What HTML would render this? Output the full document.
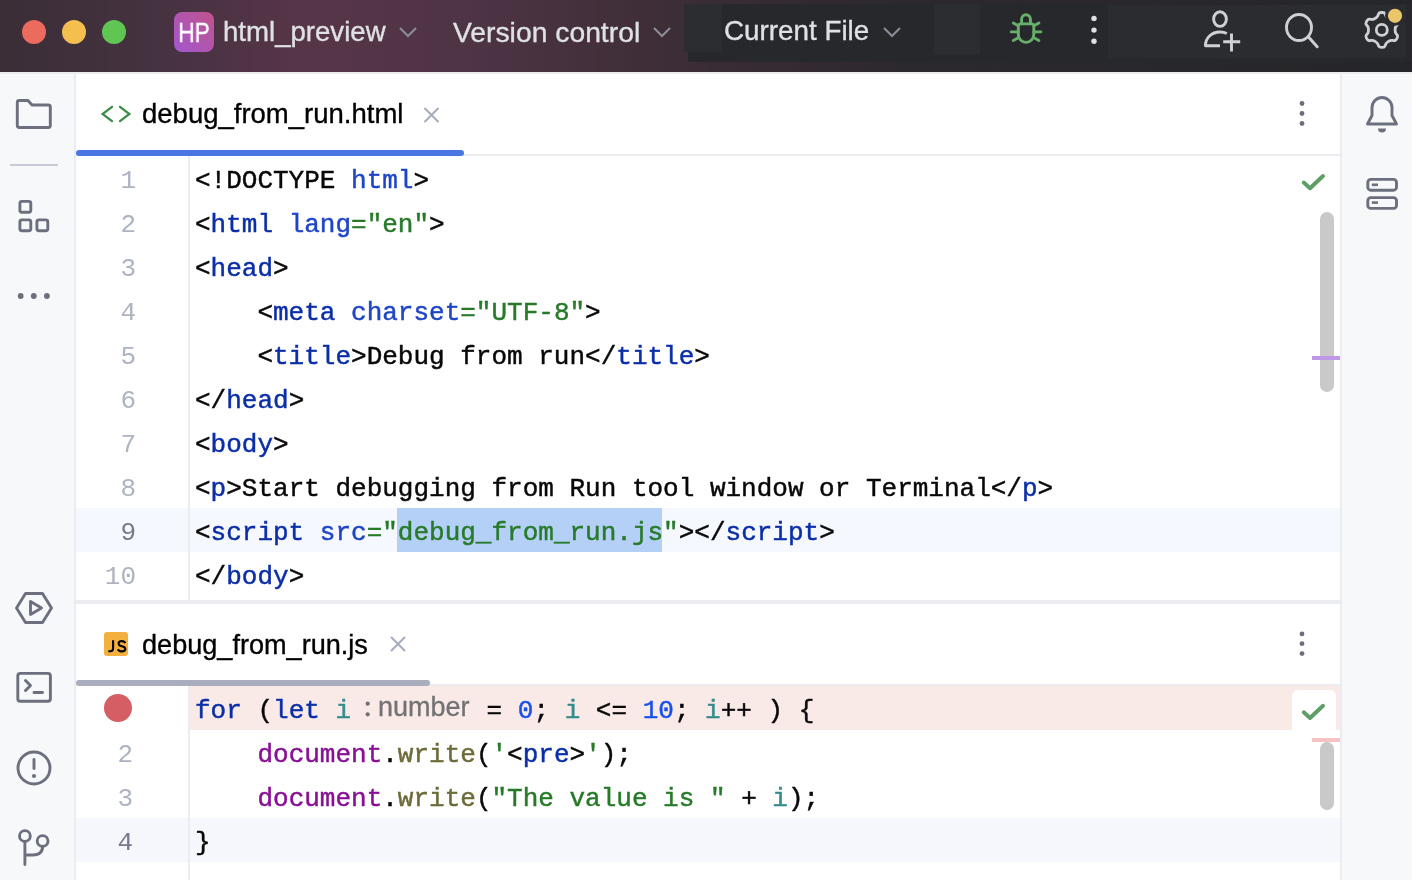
<!DOCTYPE html>
<html><head><meta charset="utf-8">
<style>
*{box-sizing:border-box;margin:0;padding:0}
html,body{width:1412px;height:880px;overflow:hidden;background:#fff;position:relative}
body{font-family:"Liberation Sans",sans-serif;-webkit-font-smoothing:antialiased}
.abs{position:absolute;will-change:transform}
#title{left:0;top:0;width:1412px;height:72px;background:#2b2c30;overflow:hidden}
#grad{left:0;top:0;width:1412px;height:72px;background:linear-gradient(90deg,#3a2e37 0px,#453240 150px,#573548 310px,#4e3445 470px,#3f2e38 640px,#372b33 760px,#2c292e 900px,#252629 1412px)}
.tl{width:24px;height:24px;border-radius:50%;top:20px}
.ttext{color:#dfe1e5;font-size:27.6px;top:17px;white-space:nowrap;-webkit-text-stroke:0.35px currentColor}
.chev{top:26px}
#leftbar{left:0;top:74px;width:74px;height:806px;background:#f7f8fa}
#rightbar{left:1342px;top:74px;width:70px;height:806px;background:#f7f8fa}
.vline{background:#ebecf0}
.code{font-family:"Liberation Mono",monospace;font-size:26px;white-space:pre;color:#080808;height:44px;line-height:44px;left:195px;padding-top:3px;-webkit-text-stroke:0.45px currentColor}
.ln{font-family:"Liberation Mono",monospace;font-size:26px;color:#aeb3c2;height:44px;line-height:44px;width:60px;text-align:right;left:76px;padding-top:3px}
.tag{color:#0b2ea8}.att{color:#1f45c6}.val{color:#267a28}
.kw{color:#0b2ea8}.var{color:#368c8c}.num{color:#1750eb}.doc{color:#871094}.fn{color:#6e6b3b}
.tabtxt{font-size:27.5px;color:#000;white-space:nowrap;-webkit-text-stroke:0.35px currentColor}
</style></head><body>
<!-- title bar -->
<div id="title" class="abs">
  <div id="grad" class="abs"></div>
  <div class="abs tl" style="left:22px;background:#ec6a5e"></div>
  <div class="abs tl" style="left:62px;background:#f4bf4f"></div>
  <div class="abs tl" style="left:102px;background:#61c554"></div>
  <div class="abs" style="left:174px;top:12px;width:40px;height:40px;border-radius:8px;background:linear-gradient(45deg,#a257cf,#c0538c)"></div>
  <div class="abs" style="left:174px;top:13px;width:40px;height:40px;color:#fff;font-size:27px;line-height:40px;text-align:center;-webkit-text-stroke:0.4px #fff;transform:scaleX(0.84)">HP</div>
  <div class="abs ttext" style="left:223px;top:16px">html_preview</div>
  <svg class="abs chev" style="left:398px" width="20" height="12" viewBox="0 0 20 12"><path d="M2 2 L10 10 L18 2" fill="none" stroke="#8b8e98" stroke-width="2"/></svg>
  <div class="abs ttext" style="left:453px;top:16px;font-size:28.3px">Version control</div>
  <svg class="abs chev" style="left:652px" width="20" height="12" viewBox="0 0 20 12"><path d="M2 2 L10 10 L18 2" fill="none" stroke="#8b8e98" stroke-width="2"/></svg>
  <div class="abs" style="left:688px;top:4px;width:724px;height:58px;background:#27282c"></div>
  <div class="abs" style="left:684px;top:4px;width:38px;height:48px;background:#2c2d31"></div>
  <div class="abs ttext" style="left:724px;top:15px;font-size:27.8px">Current File</div>
  <svg class="abs chev" style="left:882px" width="20" height="12" viewBox="0 0 20 12"><path d="M2 2 L10 10 L18 2" fill="none" stroke="#8b8e98" stroke-width="2"/></svg>
  <div class="abs" style="left:934px;top:4px;width:46px;height:50px;background:#2c2d31"></div>
  <div class="abs" style="left:1108px;top:5px;width:298px;height:53px;background:#2b2c30"></div>

  <!-- bug -->
  <svg class="abs" style="left:1000px;top:6px" width="52" height="46" viewBox="0 0 52 46">
    <g fill="none" stroke="#68af6b" stroke-width="2.9" stroke-linecap="round" stroke-linejoin="round">
      <path d="M21.6 17.9 V13.1 A4.4 4.4 0 0 1 30.4 13.1 V17.9"/>
      <path d="M18.3 20.2 Q18.3 17.9 20.6 17.9 H31.5 Q33.8 17.9 33.8 20.2 V28.6 A7.75 7.75 0 0 1 18.3 28.6 Z"/>
      <path d="M13.3 17 L18.2 19.8 M11.3 25.9 H18.2 M13.3 34.5 L18.2 31.7"/>
      <path d="M38.9 17 L34 19.8 M40.9 25.9 H34 M38.9 34.5 L34 31.7"/>
    </g>
  </svg>
  <!-- more -->
  <svg class="abs" style="left:1084px;top:10px" width="20" height="40" viewBox="0 0 20 40">
    <g fill="#dfe1e5"><circle cx="10" cy="8.4" r="2.7"/><circle cx="10" cy="20.1" r="2.7"/><circle cx="10" cy="31.2" r="2.7"/></g>
  </svg>
  <!-- person add -->
  <svg class="abs" style="left:1200px;top:6px" width="44" height="50" viewBox="0 0 44 50">
    <g fill="none" stroke="#ced0d6" stroke-width="2.9" stroke-linecap="butt" stroke-linejoin="round">
      <ellipse cx="20" cy="13.1" rx="6.4" ry="7.3"/>
      <path d="M26.8 27.6 C25 26.6 22.8 26 20 26 C11.5 26 5.4 32 5.4 39.8 H20"/>
      <path d="M31.5 27.6 V45.5 M23.2 35.8 H40.2"/>
    </g>
  </svg>
  <!-- search -->
  <svg class="abs" style="left:1278px;top:6px" width="46" height="50" viewBox="0 0 46 50">
    <g fill="none" stroke="#ced0d6" stroke-width="2.9" stroke-linecap="round">
      <ellipse cx="21" cy="21.5" rx="12.5" ry="13"/>
      <path d="M30.5 31 L39.2 40.8"/>
    </g>
  </svg>
  <!-- gear -->
  <svg class="abs" style="left:1360px;top:6px" width="52" height="48" viewBox="0 0 52 48">
    <g fill="none" stroke="#ced0d6" stroke-width="2.8" stroke-linejoin="round">
      <path d="M15.80 11.95 Q17.37 11.04 17.96 9.46 L18.46 8.10 Q19.05 6.52 20.97 6.52 L22.63 6.52 Q24.55 6.52 25.14 8.10 L25.64 9.46 Q26.23 11.04 27.80 11.95 L29.15 12.73 Q30.72 13.64 32.39 13.35 L33.81 13.11 Q35.48 12.82 36.44 14.49 L37.27 15.92 Q38.23 17.59 37.15 18.89 L36.23 20.01 Q35.15 21.30 35.15 23.12 L35.15 24.68 Q35.15 26.50 36.23 27.79 L37.15 28.91 Q38.23 30.21 37.27 31.88 L36.44 33.31 Q35.48 34.98 33.81 34.69 L32.39 34.45 Q30.72 34.16 29.15 35.07 L27.80 35.85 Q26.23 36.76 25.64 38.34 L25.14 39.70 Q24.55 41.28 22.63 41.28 L20.97 41.28 Q19.05 41.28 18.46 39.70 L17.96 38.34 Q17.37 36.76 15.80 35.85 L14.45 35.07 Q12.88 34.16 11.21 34.45 L9.79 34.69 Q8.12 34.98 7.16 33.31 L6.33 31.88 Q5.37 30.21 6.45 28.91 L7.37 27.79 Q8.45 26.50 8.45 24.68 L8.45 23.12 Q8.45 21.30 7.37 20.01 L6.45 18.89 Q5.37 17.59 6.33 15.92 L7.16 14.49 Q8.12 12.82 9.79 13.11 L11.21 13.35 Q12.88 13.64 14.45 12.73 Z"/>
      <circle cx="21.8" cy="23.9" r="5.5"/>
    </g>
    <circle cx="35" cy="9.8" r="10" fill="#2b2c30"/>
    <circle cx="35" cy="9.8" r="7.1" fill="#eac56b"/>
  </svg>
</div>
<div class="abs vline" style="left:0;top:72px;width:1412px;height:2px"></div>
<div id="leftbar" class="abs"></div>
<div class="abs vline" style="left:74px;top:74px;width:2px;height:806px"></div>
<div id="rightbar" class="abs"></div>
<div class="abs vline" style="left:1340px;top:74px;width:2px;height:806px"></div>
<!-- left toolbar icons -->
<svg class="abs" style="left:0;top:74px" width="74" height="806" viewBox="0 74 74 806">
  <g fill="none" stroke="#6c707e" stroke-width="2.9" stroke-linejoin="round" stroke-linecap="round">
    <path d="M17.3 102.5 Q17.3 100.5 19.3 100.5 H28 L32 105 H48.3 Q50.3 105 50.3 107 V125.5 Q50.3 127.5 48.3 127.5 H19.3 Q17.3 127.5 17.3 125.5 Z"/>
    <rect x="19.9" y="201.4" width="10.9" height="10.9" rx="2"/>
    <rect x="19.9" y="219.9" width="10.9" height="10.9" rx="2"/>
    <rect x="36.9" y="219.9" width="10.9" height="10.9" rx="2"/>
    <path d="M34 593.5 L50.5 593.5 L0 0" stroke="none"/>
    <path d="M25.5 593.5 H42.5 L51.5 608 L42.5 622.5 H25.5 L16.5 608 Z"/>
    <path d="M30.5 601.5 V614.5 L41.5 608 Z"/>
    <rect x="17.8" y="673.4" width="32.6" height="27.9" rx="2.5"/>
    <path d="M25.5 680.5 L30.5 685.5 L25.5 690.5 M34 692.5 H42.5"/>
    <circle cx="34" cy="768" r="16"/>
    <path d="M34 759.5 V768.5"/>
    <path d="M24.9 841.5 V864.5 M42.6 846.3 Q42.6 855 33 855 H24.9"/>
    <circle cx="24.9" cy="836" r="5.4"/>
    <circle cx="42.6" cy="841" r="5.4"/>
  </g>
  <g fill="#6c707e"><circle cx="20.7" cy="296" r="2.9"/><circle cx="33.8" cy="296" r="2.9"/><circle cx="46.9" cy="296" r="2.9"/><circle cx="34" cy="776" r="2.1"/></g>
  <rect x="10" y="164" width="48" height="2" fill="#c9ccd6"/>
</svg>
<!-- right toolbar icons -->
<svg class="abs" style="left:1342px;top:74px" width="70" height="806" viewBox="1342 74 70 806">
  <g fill="none" stroke="#6c707e" stroke-width="2.9" stroke-linejoin="round" stroke-linecap="round">
    <path d="M1367.5 124 L1372 115.5 V107.5 A10 10 0 0 1 1392 107.5 V115.5 L1396.5 124 Z"/>
    <rect x="1367.8" y="179.4" width="28.7" height="10.8" rx="3"/>
    <rect x="1367.8" y="197.6" width="28.7" height="10.8" rx="3"/>
  </g>
  <path d="M1378 128.5 H1386 A4 4 0 0 1 1378 128.5 Z" fill="#6c707e"/>
  <g fill="#6c707e"><rect x="1371.8" y="183.5" width="6.2" height="2.6"/><rect x="1371.8" y="201.3" width="6.2" height="2.6"/></g>
</svg>


<!-- top tab bar -->
<div class="abs vline" style="left:76px;top:154px;width:1264px;height:2px"></div>
<div class="abs" style="left:76px;top:150px;width:388px;height:6px;border-radius:3px;background:#4a76e4"></div>
<div class="abs tabtxt" style="left:142px;top:98px">debug_from_run.html</div>


<!-- html tab icon -->
<svg class="abs" style="left:96px;top:100px" width="40" height="30" viewBox="96 100 40 30">
  <g fill="none" stroke="#3f8d4b" stroke-width="2.3" stroke-linecap="round" stroke-linejoin="miter">
    <path d="M112 106.8 L102.6 114 L112 121.1"/>
    <path d="M120 106.8 L129.4 114 L120 121.1"/>
  </g>
</svg>
<!-- close x top -->
<svg class="abs" style="left:420px;top:104px" width="24" height="22" viewBox="420 104 24 22">
  <path d="M425 108.5 L438 121.5 M438 108.5 L425 121.5" stroke="#a8adbd" stroke-width="2.1" stroke-linecap="round"/>
</svg>
<!-- more dots top -->
<svg class="abs" style="left:1292px;top:96px" width="20" height="36" viewBox="1292 96 20 36">
  <g fill="#6c707e"><circle cx="1302" cy="103.5" r="2.4"/><circle cx="1302" cy="113.5" r="2.4"/><circle cx="1302" cy="123.5" r="2.4"/></g>
</svg>
<!-- check top -->
<svg class="abs" style="left:1296px;top:168px" width="36" height="28" viewBox="1296 168 36 28">
  <path d="M1303.8 182.5 L1310 188.2 L1323 176" fill="none" stroke="#5d9f66" stroke-width="4" stroke-linecap="round" stroke-linejoin="round"/>
</svg>
<!-- scroll thumb top -->
<div class="abs" style="left:1320px;top:212px;width:14px;height:180px;border-radius:7px;background:#c9c9c9"></div>
<div class="abs" style="left:1312px;top:356px;width:28px;height:4px;background:#bf98e8"></div>
<!-- current line 9 -->
<div class="abs" style="left:76px;top:508px;width:1264px;height:44px;background:#f5f8fe"></div>
<!-- gutter line -->
<div class="abs vline" style="left:188px;top:156px;width:2px;height:444px"></div>

<div class="abs ln" style="top:156px">1</div>
<div class="abs ln" style="top:200px">2</div>
<div class="abs ln" style="top:244px">3</div>
<div class="abs ln" style="top:288px">4</div>
<div class="abs ln" style="top:332px">5</div>
<div class="abs ln" style="top:376px">6</div>
<div class="abs ln" style="top:420px">7</div>
<div class="abs ln" style="top:464px">8</div>
<div class="abs ln" style="top:508px;color:#767a8a">9</div>
<div class="abs ln" style="top:552px">10</div>

<div class="abs code" style="top:156px">&lt;!DOCTYPE <span class="att">html</span>&gt;</div>
<div class="abs code" style="top:200px">&lt;<span class="tag">html</span> <span class="att">lang</span><span class="val">="en"</span>&gt;</div>
<div class="abs code" style="top:244px">&lt;<span class="tag">head</span>&gt;</div>
<div class="abs code" style="top:288px">    &lt;<span class="tag">meta</span> <span class="att">charset</span><span class="val">="UTF-8"</span>&gt;</div>
<div class="abs code" style="top:332px">    &lt;<span class="tag">title</span>&gt;Debug from run&lt;/<span class="tag">title</span>&gt;</div>
<div class="abs code" style="top:376px">&lt;/<span class="tag">head</span>&gt;</div>
<div class="abs code" style="top:420px">&lt;<span class="tag">body</span>&gt;</div>
<div class="abs code" style="top:464px">&lt;<span class="tag">p</span>&gt;Start debugging from Run tool window or Terminal&lt;/<span class="tag">p</span>&gt;</div>
<div class="abs" style="left:397px;top:508px;width:265px;height:44px;background:#b5d0f7"></div>
<div class="abs code" style="top:508px">&lt;<span class="tag">script</span> <span class="att">src</span><span class="val">="debug_from_run.js"</span>&gt;&lt;/<span class="tag">script</span>&gt;</div>
<div class="abs code" style="top:552px">&lt;/<span class="tag">body</span>&gt;</div>

<!-- split divider -->
<div class="abs vline" style="left:76px;top:600px;width:1264px;height:4px"></div>

<!-- bottom tab bar -->
<div class="abs vline" style="left:76px;top:684px;width:1264px;height:2px"></div>
<div class="abs" style="left:76px;top:680px;width:354px;height:6px;border-radius:3px;background:#a9adbd"></div>
<div class="abs tabtxt" style="left:142px;top:629px;font-size:27.1px">debug_from_run.js</div>


<!-- js tab icon -->
<div class="abs" style="left:104px;top:632px;width:24px;height:24px;border-radius:3px;background:#f4b03f"></div>
<svg class="abs" style="left:104px;top:632px" width="24" height="24" viewBox="104 632 24 24">
  <g fill="none" stroke="#000" stroke-width="2.1" stroke-linecap="butt">
    <path d="M113.1 640.2 V648.3 Q113.1 651.2 110.2 651.2 H108.3"/>
    <path d="M125.2 643.2 Q124.4 641.1 121.7 641.1 Q118.6 641.1 118.6 643.6 Q118.6 645.7 121.8 646.2 Q125.3 646.8 125.3 649.1 Q125.3 651.4 121.8 651.4 Q118.9 651.4 117.9 649.2"/>
  </g>
</svg>
<!-- close x bottom -->
<svg class="abs" style="left:386px;top:633px" width="24" height="22" viewBox="386 633 24 22">
  <path d="M391.5 637.5 L404.5 650.5 M404.5 637.5 L391.5 650.5" stroke="#a8adbd" stroke-width="2.1" stroke-linecap="round"/>
</svg>
<svg class="abs" style="left:1292px;top:624px" width="20" height="40" viewBox="1292 624 20 40">
  <g fill="#6c707e"><circle cx="1302" cy="633.9" r="2.4"/><circle cx="1302" cy="643.7" r="2.4"/><circle cx="1302" cy="653.6" r="2.4"/></g>
</svg>
<div class="abs" style="left:76px;top:818px;width:1264px;height:44px;background:#f5f7fc"></div>
<div class="abs vline" style="left:188px;top:686px;width:2px;height:194px"></div>
<div class="abs" style="left:190px;top:686px;width:1150px;height:44px;background:#f9e9e7"></div>
<div class="abs" style="left:104px;top:694px;width:28px;height:28px;border-radius:50%;background:#d55e65"></div>
<div class="abs ln" style="top:730px;left:72.5px">2</div>
<div class="abs ln" style="top:774px;left:72.5px">3</div>
<div class="abs ln" style="top:818px;left:72.5px;color:#767a8a">4</div>

<div class="abs code" style="top:686px"><span class="kw">for</span> (<span class="kw">let</span> <span class="var">i</span></div>
<div class="abs code" style="top:686px;left:470.5px"> = <span class="num">0</span>; <span class="var">i</span> &lt;= <span class="num">10</span>; <span class="var">i</span>++ ) {</div>
<svg class="abs" style="left:360px;top:696px" width="16" height="26"><circle cx="7.7" cy="7.7" r="2.1" fill="#707272"/><circle cx="7.7" cy="18.3" r="2.1" fill="#707272"/></svg>
<div class="abs" style="left:378px;top:685px;height:44px;line-height:44px;font-size:27px;color:#727272;-webkit-text-stroke:0.3px currentColor">number</div>
<div class="abs code" style="top:730px">    <span class="doc">document</span>.<span class="fn">write</span>(<span class="val">'</span>&lt;<span class="tag">pre</span>&gt;<span class="val">'</span>);</div>
<div class="abs code" style="top:774px">    <span class="doc">document</span>.<span class="fn">write</span>(<span class="val">"The value is "</span> + <span class="var">i</span>);</div>
<div class="abs code" style="top:818px">}</div>


<!-- check box bottom -->
<div class="abs" style="left:1292px;top:690px;width:44px;height:40px;border-radius:6px 6px 0 0;background:#fff"></div>
<svg class="abs" style="left:1296px;top:698px" width="36" height="28" viewBox="1296 698 36 28">
  <path d="M1303.8 712.3 L1310 718 L1323 705.8" fill="none" stroke="#5d9f66" stroke-width="4" stroke-linecap="round" stroke-linejoin="round"/>
</svg>
<div class="abs" style="left:1312px;top:738px;width:28px;height:4px;background:#f5c3c3"></div>
<div class="abs" style="left:1320px;top:742px;width:14px;height:68px;border-radius:7px;background:#c9c9c9"></div>
</body></html>
